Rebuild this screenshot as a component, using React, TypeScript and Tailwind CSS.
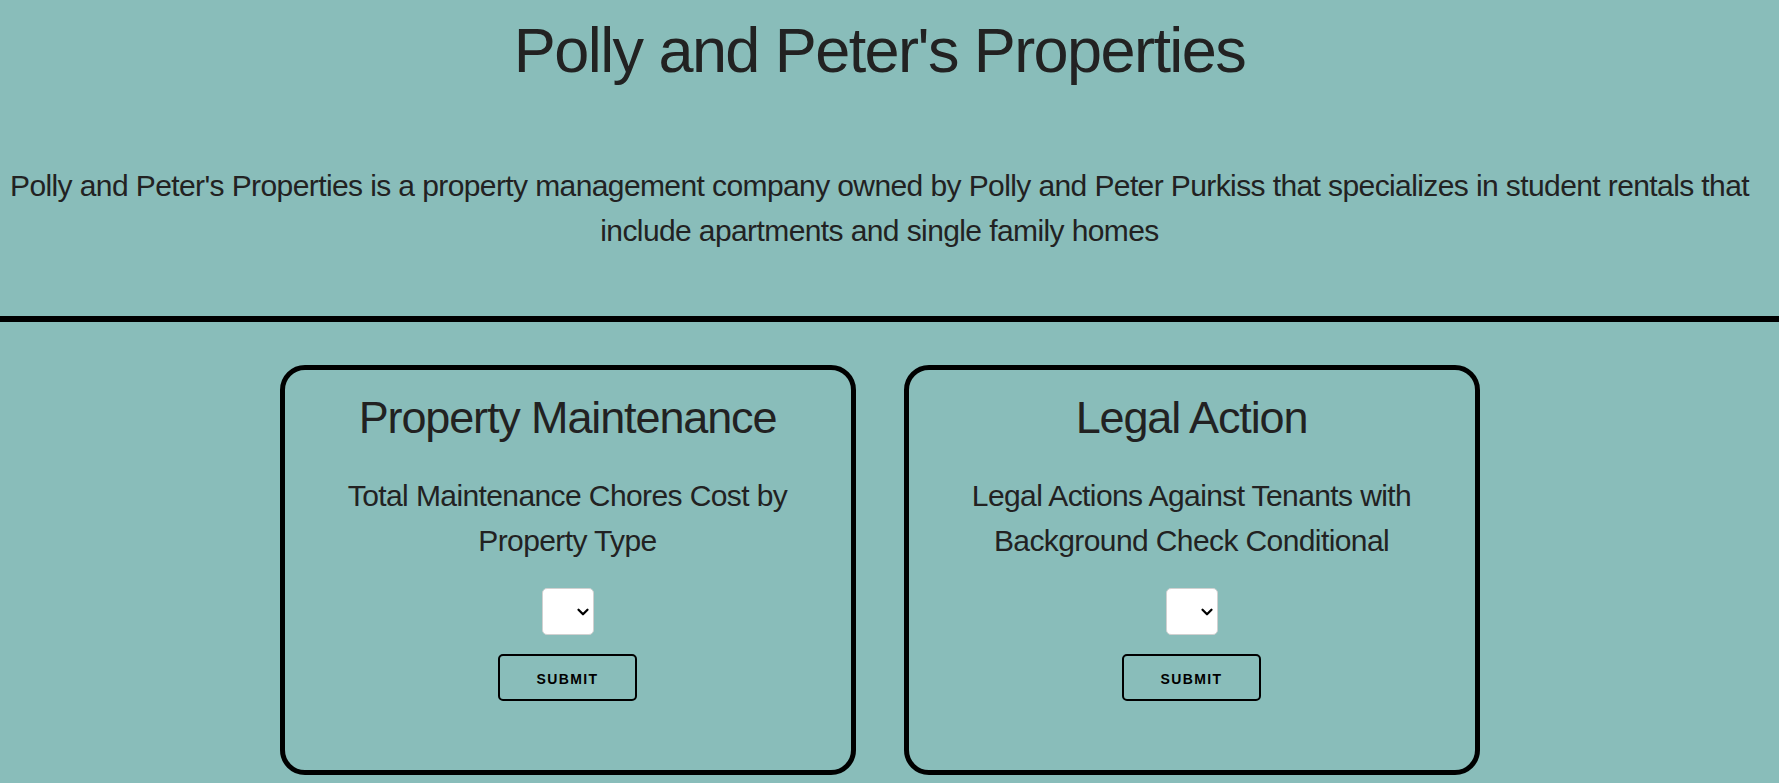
import { ChevronDown } from "lucide-react";

type CardProps = {
  id: string;
  title: string;
  description: string;
};

function ReportCard({ id, title, description }: CardProps) {
  return (
    <section className="flex w-full flex-col items-center rounded-[25px] border-5 border-black px-10 pt-[19px] pb-[69px] text-center">
      <h2 className="text-[45px] leading-[58px] tracking-tight">{title}</h2>
      <form
        className="flex flex-col items-center"
        onSubmit={(event) => event.preventDefault()}
      >
        <label
          htmlFor={id}
          className="mt-[26px] mb-[25px] text-3xl leading-[45px] tracking-[-0.02em]"
        >
          {description}
        </label>
        <div className="mb-[19px] grid grid-cols-1 items-center">
          <select
            id={id}
            className="col-start-1 row-start-1 h-[47px] w-[52px] appearance-none rounded-[5px] border border-[#d1d1d1] bg-white px-3 text-lg"
          >
            <option value=""></option>
          </select>
          <ChevronDown
            aria-hidden="true"
            strokeWidth={3}
            className="pointer-events-none col-start-1 row-start-1 mr-[2px] size-[18px] justify-self-end text-black"
          />
        </div>
        <button
          type="submit"
          className="h-[47px] rounded-[5px] border-2 border-black px-9 pt-[2px] text-sm font-semibold tracking-[0.1em] text-black uppercase"
        >
          Submit
        </button>
      </form>
    </section>
  );
}

export default function App() {
  return (
    <div className="min-h-screen bg-[#89bdba] pb-2 font-['Liberation_Sans',Arial,sans-serif] text-[#222222]">
      <header className="border-b-6 border-black pt-[13px] pr-5 pb-[63px] text-center">
        <h1 className="text-[63px] leading-[75px] tracking-tight">
          Polly and Peter's Properties
        </h1>
        <p className="mt-[75px] text-3xl leading-[45px] tracking-[-0.02em]">
          Polly and Peter's Properties is a property management company owned by
          Polly and Peter Purkiss that specializes in student rentals that
          include apartments and single family homes
        </p>
      </header>
      <main className="mt-[43px] pr-5">
        <div className="mx-auto grid max-w-[1200px] grid-cols-2 gap-12">
          <ReportCard
            id="property-type"
            title="Property Maintenance"
            description="Total Maintenance Chores Cost by Property Type"
          />
          <ReportCard
            id="background-check"
            title="Legal Action"
            description="Legal Actions Against Tenants with Background Check Conditional"
          />
        </div>
      </main>
    </div>
  );
}
